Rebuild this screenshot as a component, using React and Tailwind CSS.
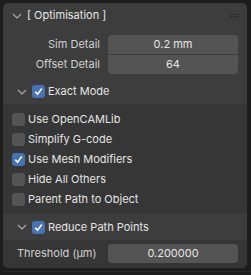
import React from "react";

const FONT = { fontFamily: "Inter, 'DejaVu Sans', sans-serif" };

function Chevron({ className = "" }) {
  return (
    <svg width="10" height="6" viewBox="0 0 10 6" className={className}>
      <path d="M1 1 L5 5 L9 1" fill="none" stroke="#a8a8a8" strokeWidth="1.2" />
    </svg>
  );
}

function Check({ on }) {
  return (
    <span
      className={`flex h-[13px] w-[13px] items-center justify-center rounded-[3px] ${
        on ? "bg-[#4772b3]" : "bg-[#545454]"
      }`}
    >
      {on && (
        <svg width="11" height="11" viewBox="0 0 11 11">
          <path d="M2.2 5.8 L4.5 8.2 L8.8 2.6" fill="none" stroke="#fff" strokeWidth="1.6" />
        </svg>
      )}
    </span>
  );
}

const OPTIONS = [
  ["Use OpenCAMLib", false],
  ["Simplify G-code", false],
  ["Use Mesh Modifiers", true],
  ["Hide All Others", false],
  ["Parent Path to Object", false],
];

export default function App() {
  return (
    <div className="h-[275px] w-[251px] bg-[#1d1d1d] pl-[3px] pt-[3px]" style={FONT}>
      <div className="w-[244px] overflow-hidden rounded-[5px] bg-[#3d3d3d] text-[11px] text-[#e5e5e5]">
        {/* header */}
        <div className="flex h-[25px] items-center pl-[9px] pr-[9px]">
          <Chevron />
          <span className="ml-[5px]">[ Optimisation ]</span>
          <span className="ml-auto grid grid-cols-4 gap-x-[1px] gap-y-[1px]">
            {Array.from({ length: 8 }).map((_, i) => (
              <span key={i} className="h-[1px] w-[1px] bg-[#1a1a1a]" />
            ))}
          </span>
        </div>

        {/* detail fields */}
        <div className="flex flex-col gap-[1px] pb-[5px] pt-[7px]">
          <div className="flex items-center">
            <span className="w-[97px] text-right text-[#d0d0d0]">Sim Detail</span>
            <span className="ml-[8px] flex h-[19px] w-[130px] items-center justify-center rounded-t-[4px] bg-[#545454]">
              0.2 mm
            </span>
          </div>
          <div className="flex items-center">
            <span className="w-[97px] text-right text-[#d0d0d0]">Offset Detail</span>
            <span className="ml-[8px] flex h-[19px] w-[130px] items-center justify-center rounded-b-[4px] bg-[#545454]">
              64
            </span>
          </div>
        </div>

        {/* Exact Mode subpanel */}
        <div className="flex h-[25px] items-center bg-[#3d3d3d] pl-[14px]">
          <Chevron />
          <span className="ml-[5px]">
            <Check on />
          </span>
          <span className="ml-[3px]">Exact Mode</span>
        </div>
        <div className="flex flex-col bg-[#363636] pb-[5px] pt-[5px]">
          {OPTIONS.map(([label, on]) => (
            <div key={label} className="flex h-[20px] items-center pl-[9px]">
              <Check on={on} />
              <span className="ml-[3px]">{label}</span>
            </div>
          ))}
        </div>

        {/* Reduce Path Points subpanel */}
        <div className="flex h-[26px] items-center bg-[#3d3d3d] pl-[14px]">
          <Chevron />
          <span className="ml-[5px]">
            <Check on />
          </span>
          <span className="ml-[3px]">Reduce Path Points</span>
        </div>
        <div className="flex h-[28px] items-center bg-[#363636] pb-[1px]">
          <span className="w-[105px] pl-[14px] text-[#d0d0d0]">Threshold (µm)</span>
          <span className="flex h-[19px] w-[130px] items-center justify-center rounded-[4px] bg-[#545454]">
            0.200000
          </span>
        </div>
      </div>
      <div className="mt-[3px] h-[1px] w-[248px] bg-[#2a2a2a]" />
    </div>
  );
}
